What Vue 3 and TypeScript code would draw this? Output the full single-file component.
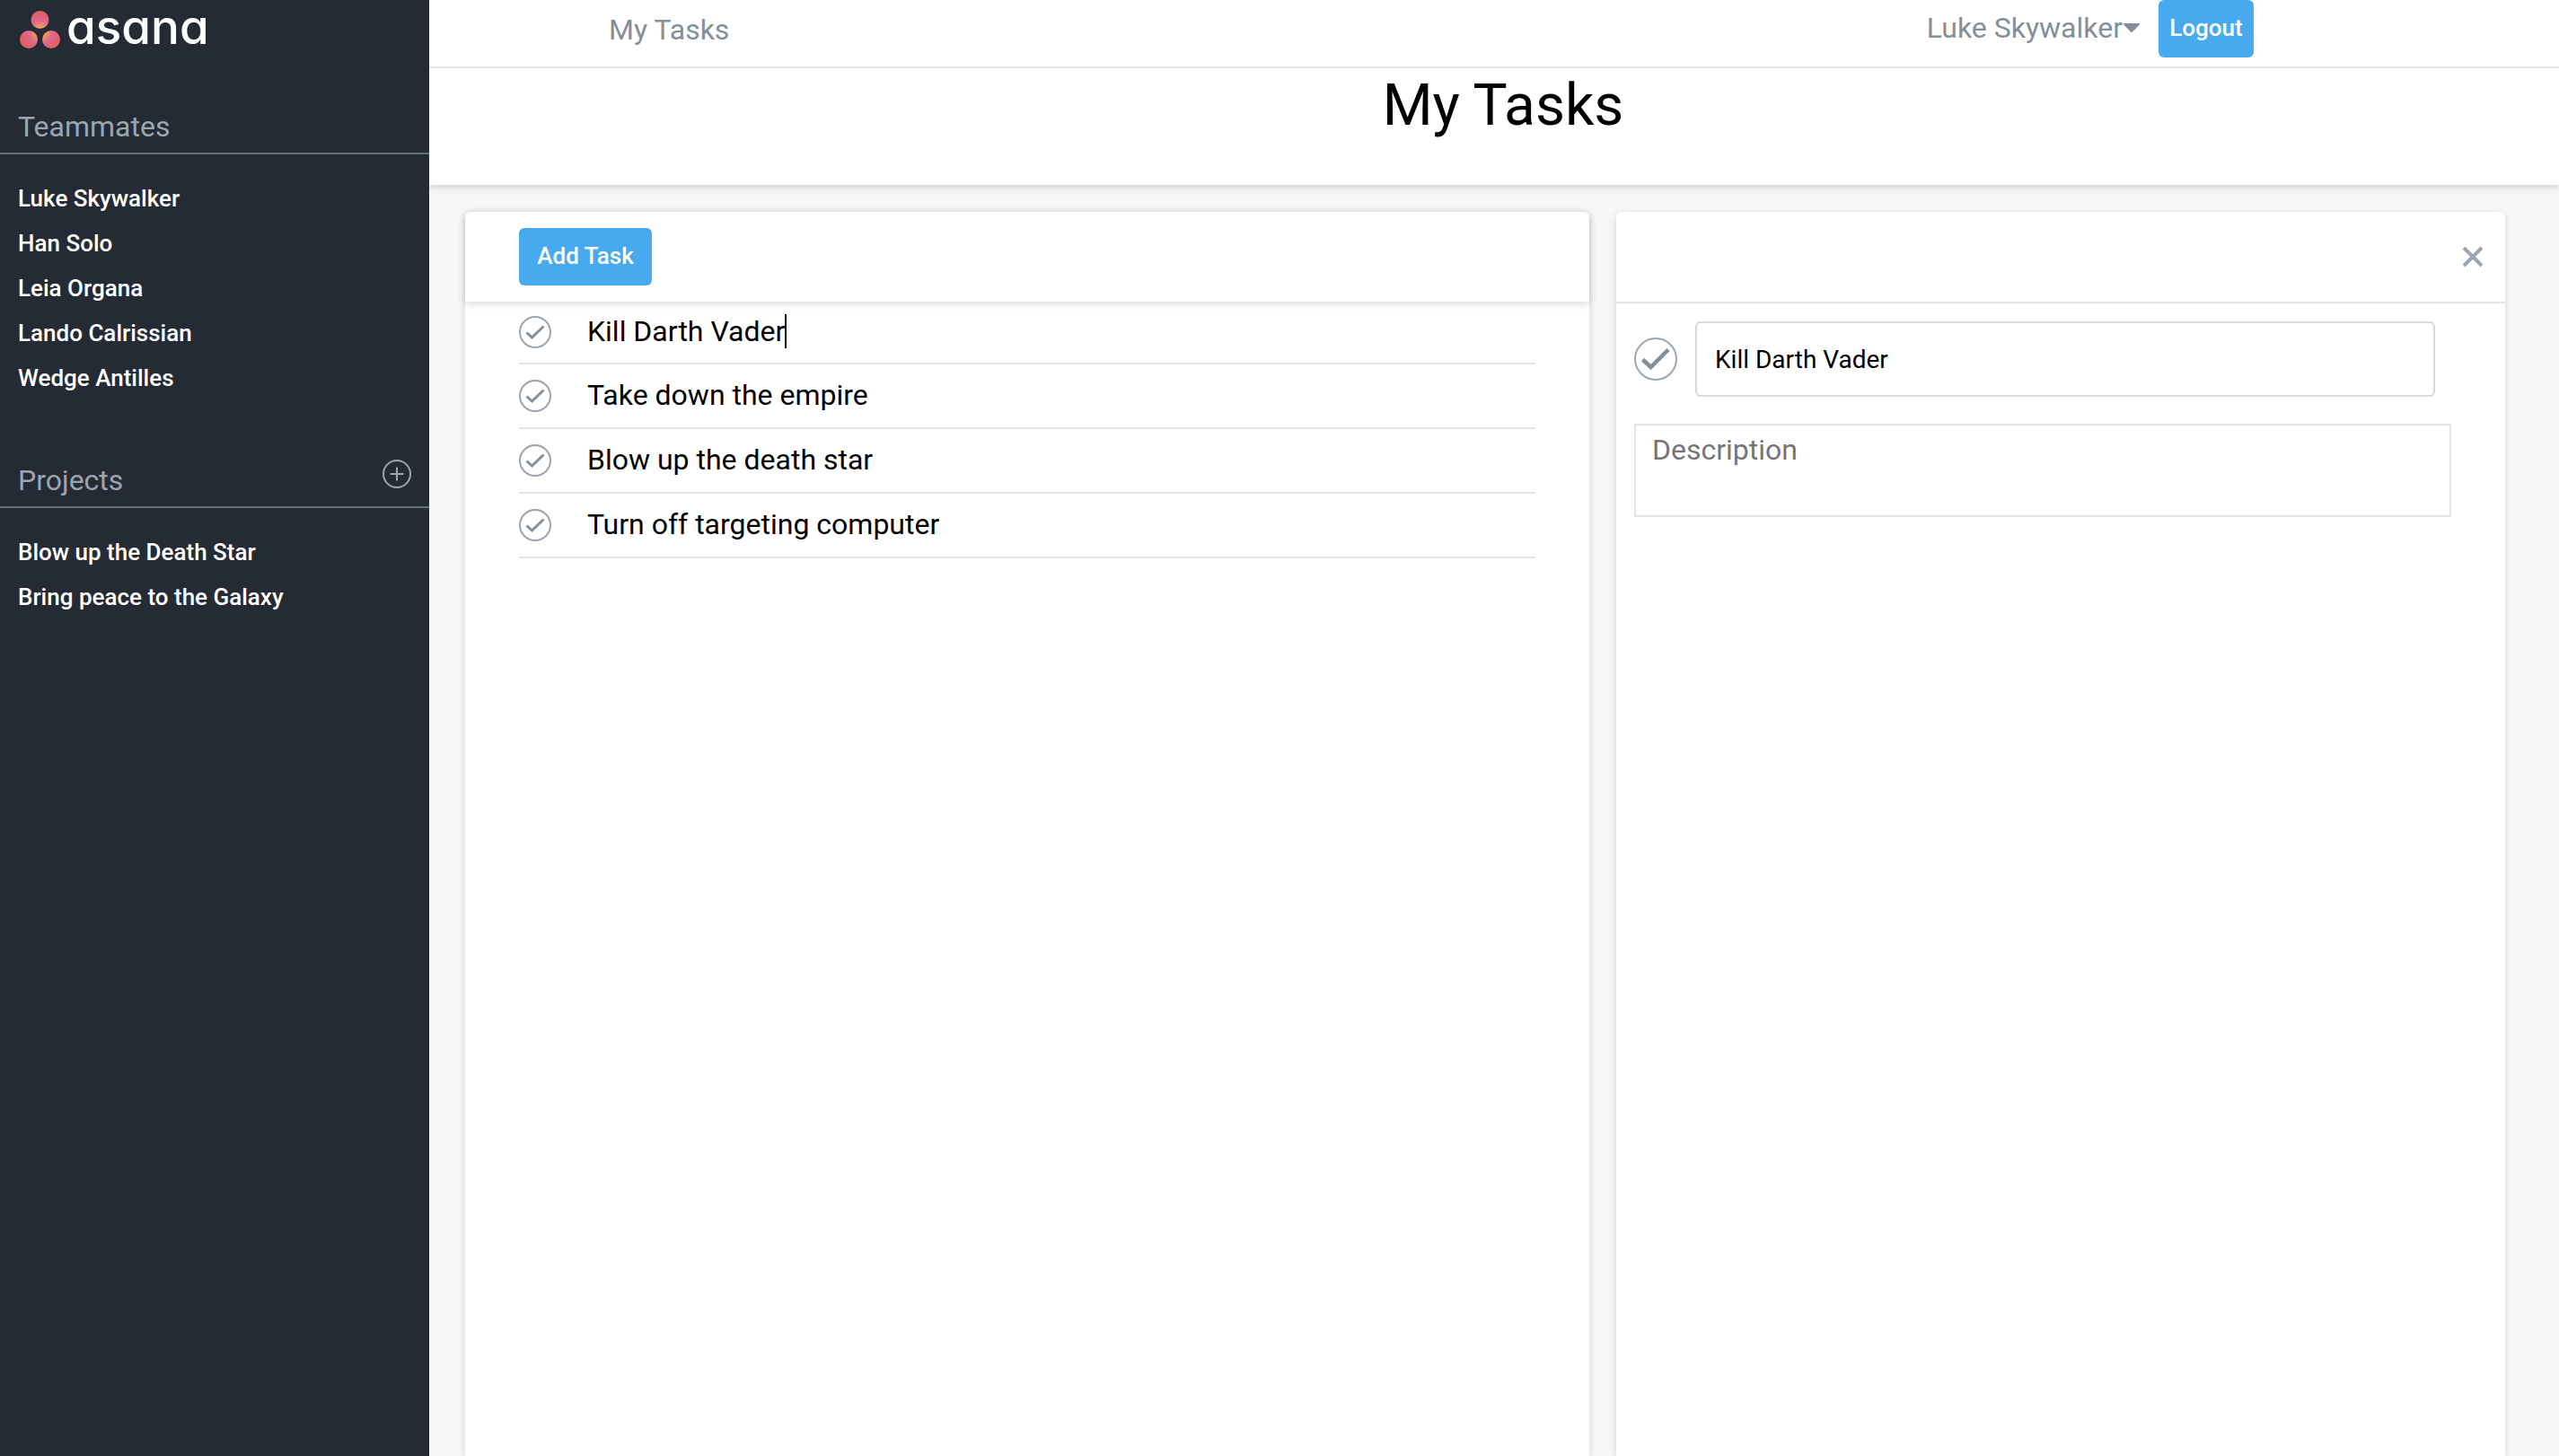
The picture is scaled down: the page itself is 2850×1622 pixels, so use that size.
<script setup lang="ts">
import { ref } from 'vue'

interface Task {
  id: number
  name: string
}

const teammates: string[] = ['Luke Skywalker', 'Han Solo', 'Leia Organa', 'Lando Calrissian', 'Wedge Antilles']
const projects: string[] = ['Blow up the Death Star', 'Bring peace to the Galaxy']
const tasks = ref<Task[]>([
  { id: 1, name: 'Kill Darth Vader' },
  { id: 2, name: 'Take down the empire' },
  { id: 3, name: 'Blow up the death star' },
  { id: 4, name: 'Turn off targeting computer' },
])
const activeId = ref(1)
const description = ref('')
</script>

<template>
  <div class="app">
    <aside class="sidebar">
      <a class="logo" href="#">
        <svg class="logo-mark" width="46" height="42" viewBox="0 0 46 42" aria-hidden="true">
          <defs>
            <radialGradient id="mark" gradientUnits="userSpaceOnUse" cx="23" cy="24" r="25">
              <stop offset="0.15" stop-color="#f2a64c" />
              <stop offset="0.55" stop-color="#e0648c" />
              <stop offset="1" stop-color="#e06053" />
            </radialGradient>
          </defs>
          <g fill="url(#mark)">
            <circle cx="22.500" cy="10" r="10" />
            <circle cx="10" cy="32" r="10" />
            <circle cx="35" cy="32" r="10" />
          </g>
        </svg>
        <span class="wordmark">asana</span>
      </a>

      <section class="group">
        <div class="group-head"><h2>Teammates</h2></div>
        <ul>
          <li v-for="name in teammates" :key="name"><a href="#">{{ name }}</a></li>
        </ul>
      </section>

      <section class="group">
        <div class="group-head">
          <h2>Projects</h2>
          <button class="icon-button add-project" type="button" aria-label="Add project">
            <svg width="32" height="32" viewBox="0 0 32 32" fill="none" stroke="#9ca6af">
              <circle cx="16" cy="16" r="15" stroke-width="2" />
              <path d="M16 8.500v15M8.500 16h15" stroke-width="2" />
            </svg>
          </button>
        </div>
        <ul>
          <li v-for="name in projects" :key="name"><a href="#">{{ name }}</a></li>
        </ul>
      </section>
    </aside>

    <div class="main">
      <nav class="topbar">
        <a class="nav-link" href="#">My Tasks</a>
        <div class="account">
          <button class="user-menu" type="button">
            Luke Skywalker
            <svg width="20" height="12" viewBox="0 0 20 12" aria-hidden="true">
              <path d="M1.500 1h17q1 .5 .3 1.500l-7.800 8q-1 1-2 0l-7.800-8Q.5 1.500 1.500 1z" fill="#848f99" />
            </svg>
          </button>
          <button class="button logout" type="button">Logout</button>
        </div>
      </nav>

      <header class="title-bar"><h1>My Tasks</h1></header>

      <main class="panes">
        <section class="pane list-pane">
          <div class="list-head">
            <button class="button add-task" type="button">Add Task</button>
          </div>
          <ul class="tasks">
            <li v-for="task in tasks" :key="task.id" class="task">
              <button class="icon-button" type="button" aria-label="Complete task">
                <svg width="36" height="36" viewBox="0 0 36 36" fill="none">
                  <circle cx="18" cy="18" r="17" stroke="#9ca6af" stroke-width="2" />
                  <path d="M8.500 18.500l6 5.500L27.500 11.500" stroke="#848f99" stroke-width="3" />
                </svg>
              </button>
              <div class="task-field">
                <input v-model="task.name" type="text" aria-label="Task name" @focus="activeId = task.id" />
                <span v-if="task.id === activeId" class="cursor"></span>
              </div>
            </li>
          </ul>
        </section>

        <section class="pane detail-pane">
          <div class="detail-head">
            <button class="icon-button" type="button" aria-label="Close">
              <svg width="24" height="24" viewBox="0 0 24 24">
                <path d="M2 2l20 20M22 2L2 22" stroke="#9ca6af" stroke-width="4" />
              </svg>
            </button>
          </div>
          <form class="detail" @submit.prevent>
            <div class="detail-title">
              <button class="icon-button" type="button" aria-label="Complete task">
                <svg width="48" height="48" viewBox="0 0 48 48" fill="none">
                  <circle cx="24" cy="24" r="23" stroke="#9ca6af" stroke-width="2" />
                  <path d="M9.500 24.500l9 8.500L38 13.500" stroke="#848f99" stroke-width="4.500" />
                </svg>
              </button>
              <input v-model="tasks[0].name" type="text" aria-label="Task title" />
            </div>
            <textarea v-model="description" placeholder="Description" aria-label="Description"></textarea>
          </form>
        </section>
      </main>
    </div>
  </div>
</template>

<style>
body {
  margin: 0;
  background: #f6f7f9;
}
</style>

<style scoped>
.app {
  display: flex;
  min-height: 100vh;
  font-family: Roboto, "Liberation Sans", sans-serif;
  font-size: 32px;
  line-height: 38px;
  color: #000;
}

h1,
h2 {
  margin: 0;
  font-weight: 400;
}

h2 {
  font-size: 32px;
}

ul {
  margin: 0;
  padding: 0;
  list-style: none;
}

a {
  color: inherit;
  text-decoration: none;
}

button,
input,
textarea {
  box-sizing: border-box;
  margin: 0;
  padding: 0;
  border: 0;
  background: none;
  font: inherit;
  color: inherit;
  outline: none;
}

button {
  cursor: pointer;
}

svg {
  display: block;
}

.icon-button {
  flex: none;
}

.sidebar {
  flex: none;
  width: 478px;
  background: #252b35;
  color: #fff;
}

.logo {
  display: flex;
  align-items: center;
  gap: 6px;
  height: 66px;
  padding-left: 22px;
}

.wordmark {
  font-family: Inter, sans-serif;
  font-size: 53px;
  line-height: 52px;
  font-weight: 500;
  font-feature-settings: "cv11";
  padding-bottom: 6px;
}

.group {
  padding-top: 56px;
}

.group + .group {
  padding-top: 70px;
}

.group-head {
  display: flex;
  justify-content: space-between;
  padding: 0 20px 10px;
  border-bottom: 2px solid #646f79;
  color: #9ca6af;
}

.add-project {
  align-self: flex-start;
  margin-top: -4px;
}

.group ul {
  padding: 24px 20px 0;
}

.group li {
  font-size: 26px;
  line-height: 50px;
  font-weight: 500;
}

.main {
  display: flex;
  flex: 1;
  flex-direction: column;
  min-width: 0;
}

.topbar {
  display: flex;
  align-items: flex-start;
  justify-content: space-between;
  height: 74px;
  padding: 0 340px 0 200px;
  border-bottom: 2px solid #e0e6e8;
  background: #fff;
  color: #848f99;
}

.nav-link {
  padding-top: 14px;
}

.account {
  display: flex;
  align-items: center;
  gap: 20px;
}

.user-menu {
  display: flex;
  align-items: center;
  padding-bottom: 2px;
}

.button {
  height: 64px;
  padding-bottom: 2px;
  border-radius: 6px;
  background: #47aaee;
  color: #fff;
  font-size: 26px;
  font-weight: 500;
}

.logout {
  width: 106px;
}

.add-task {
  width: 148px;
}

.title-bar {
  height: 130px;
  padding-left: 20px;
  background: #fff;
  box-shadow: 0 2px 8px rgba(0, 0, 0, 0.18);
  text-align: center;
  clip-path: inset(0 0 -20px 0);
}

h1 {
  padding-top: 4px;
  font-size: 64px;
  line-height: 76px;
}

.panes {
  display: flex;
  flex: 1;
  gap: 30px;
  padding: 30px 60px 0 40px;
}

.pane {
  min-width: 0;
  border-radius: 6px 6px 0 0;
  background: #fff;
  box-shadow: 0 2px 8px rgba(0, 0, 0, 0.14);
}

.list-pane {
  flex: 1252 1 0;
}

.detail-pane {
  flex: 990 1 0;
}

.list-head {
  padding: 18px 60px;
  border-radius: 6px 6px 0 0;
  box-shadow: 0 2px 8px rgba(0, 0, 0, 0.16);
}

.list-head .button {
  display: block;
}

.tasks {
  padding: 0 60px;
}

.task {
  display: flex;
  align-items: center;
  gap: 40px;
  height: 70px;
  border-bottom: 2px solid #e0e6e8;
}

.task:first-child {
  height: 68px;
}

.task-field {
  display: flex;
  flex: 1;
  padding-bottom: 2px;
}

.task-field input {
  field-sizing: content;
  height: 38px;
}

.cursor {
  width: 2px;
  height: 38px;
  background: #000;
}

.detail-head {
  display: flex;
  align-items: center;
  justify-content: flex-end;
  height: 100px;
  padding-right: 24px;
  border-bottom: 2px solid #e0e6e8;
}

.detail {
  padding: 20px 60px 20px 20px;
}

.detail-title {
  display: flex;
  align-items: center;
  gap: 20px;
  padding-right: 18px;
}

.detail-title input {
  flex: 1;
  min-width: 0;
  height: 84px;
  padding: 0 20px;
  border: 2px solid #d5dadf;
  border-radius: 6px;
  font-size: 28px;
}

textarea {
  display: block;
  width: 100%;
  height: 104px;
  margin-top: 30px;
  padding: 8px 18px;
  border: 2px solid #e0e6e8;
  resize: none;
}

textarea::placeholder {
  color: #757575;
}
</style>
